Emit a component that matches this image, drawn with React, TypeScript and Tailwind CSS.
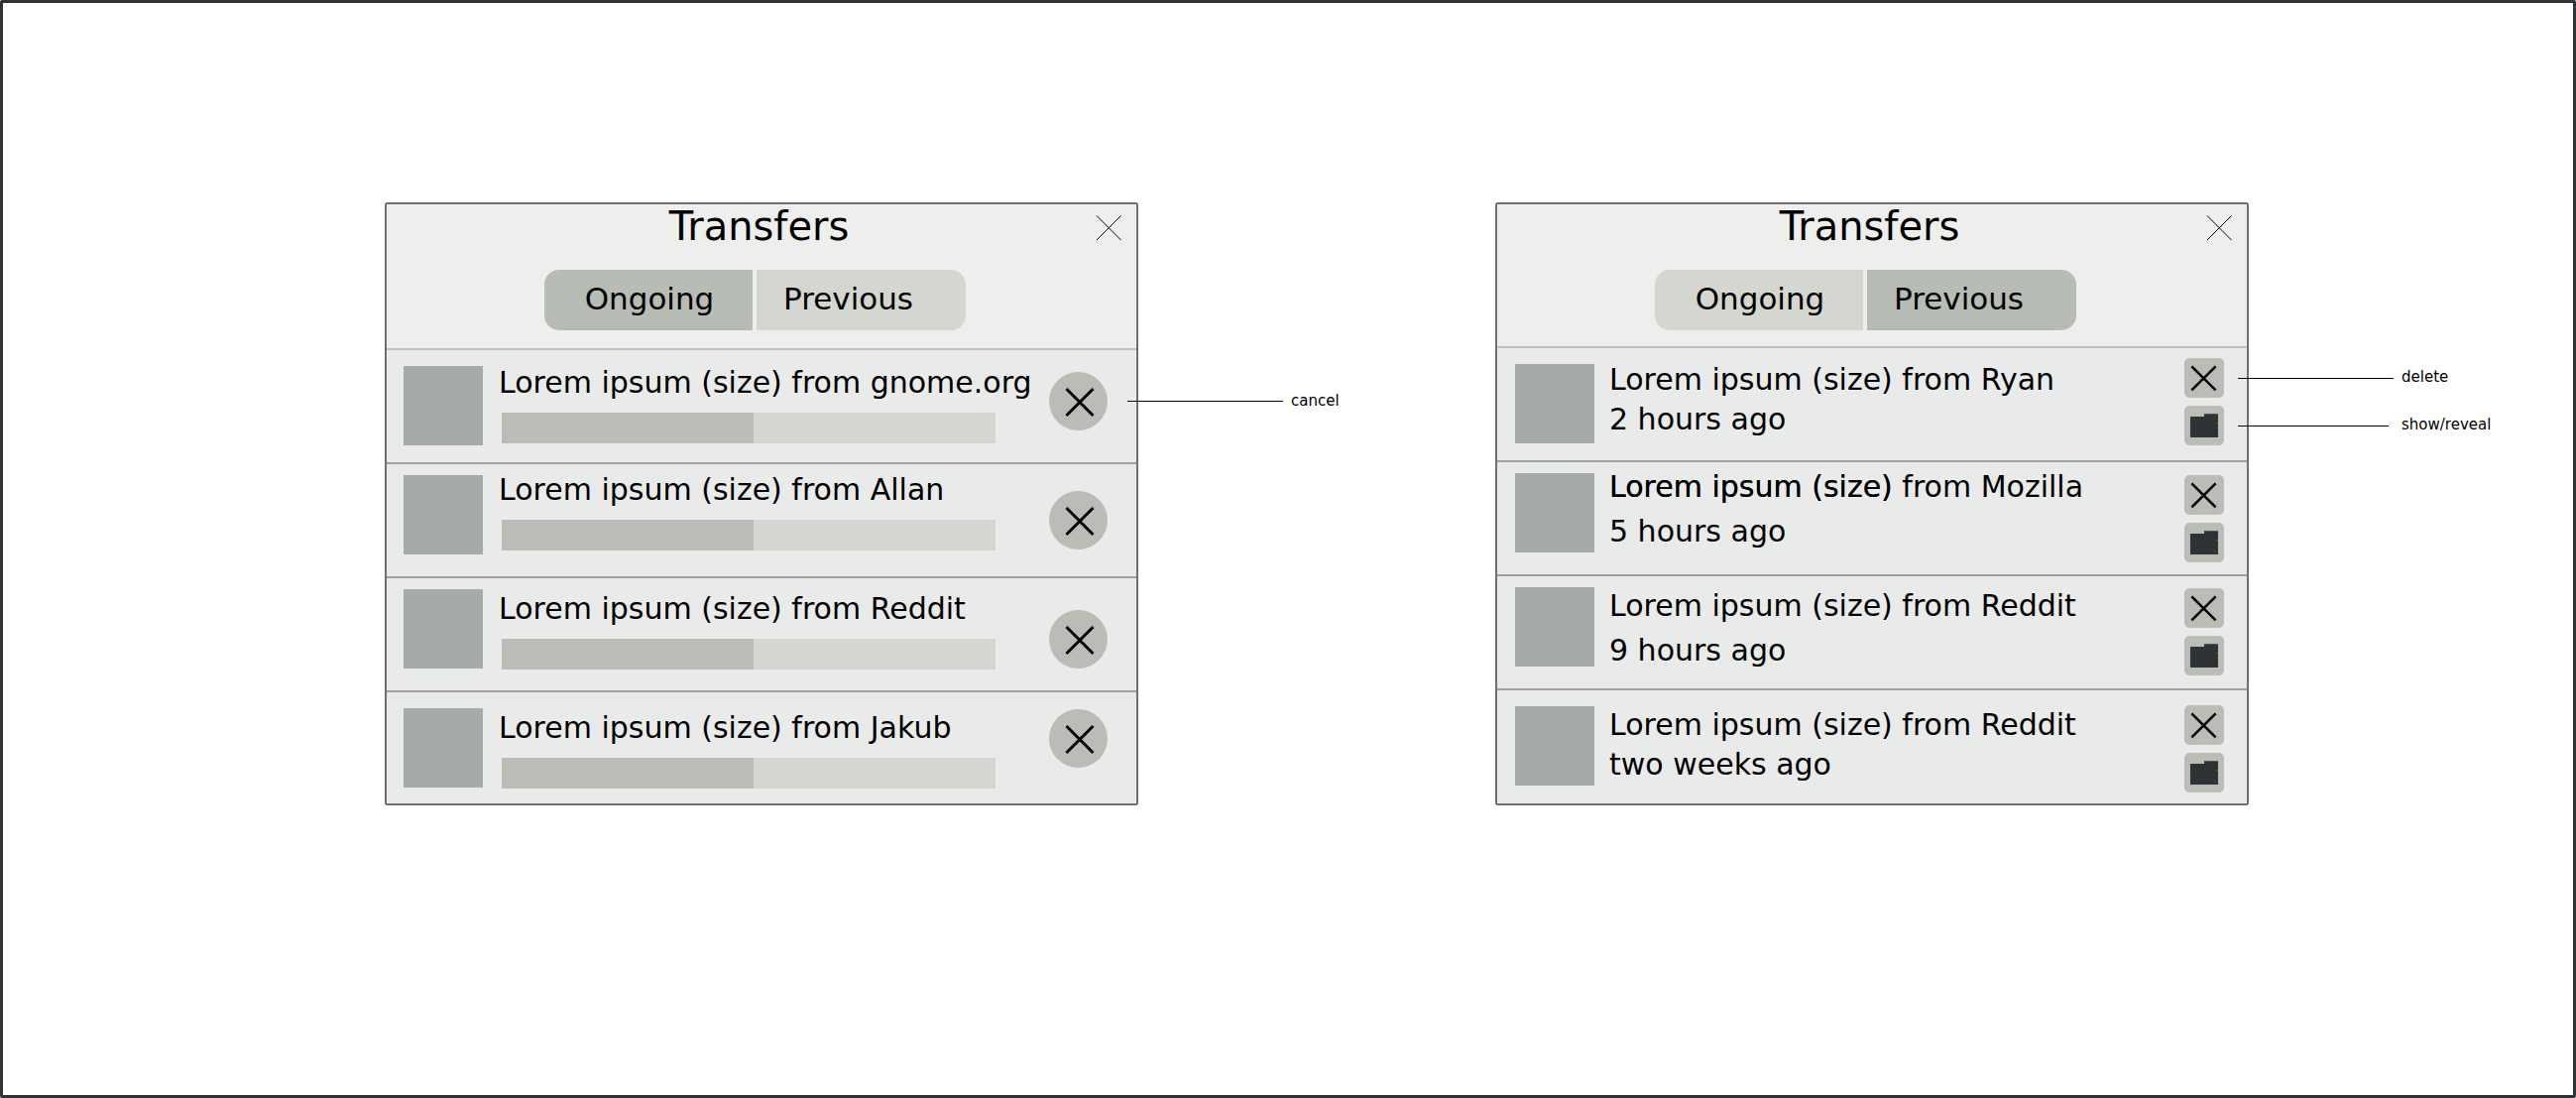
import React from "react";

type Row = {
  lead: string;
  source: string;
  when?: string;
  thumbPad: string;
  textPad: string;
  actionPad: string;
  lineGap?: string;
  emphasized?: boolean;
  notes?: string[];
};

const ongoing: Row[] = [
  { lead: "Lorem ipsum (size)", source: "from gnome.org", thumbPad: "pt-4", textPad: "pt-[15px]", actionPad: "pt-[22px]", notes: ["cancel"] },
  { lead: "Lorem ipsum (size)", source: "from Allan", thumbPad: "pt-[11px]", textPad: "pt-2", actionPad: "pt-[27px]" },
  { lead: "Lorem ipsum (size)", source: "from Reddit", thumbPad: "pt-[11px]", textPad: "pt-[13px]", actionPad: "pt-8" },
  { lead: "Lorem ipsum (size)", source: "from Jakub", thumbPad: "pt-4", textPad: "pt-[18px]", actionPad: "pt-[17px]" },
];

const previous: Row[] = [
  { lead: "Lorem ipsum (size)", source: "from Ryan", when: "2 hours ago", thumbPad: "pt-4", textPad: "pt-[14px]", lineGap: "mt-1", actionPad: "pt-[10px]", notes: ["delete", "show/reveal"] },
  { lead: "Lorem ipsum (size)", source: "from Mozilla", when: "5 hours ago", thumbPad: "pt-[11px]", textPad: "pt-[7px]", lineGap: "mt-[9px]", actionPad: "pt-[13px]", emphasized: true },
  { lead: "Lorem ipsum (size)", source: "from Reddit", when: "9 hours ago", thumbPad: "pt-[11px]", textPad: "pt-3", lineGap: "mt-[9px]", actionPad: "pt-3" },
  { lead: "Lorem ipsum (size)", source: "from Reddit", when: "two weeks ago", thumbPad: "pt-4", textPad: "pt-[17px]", lineGap: "mt-1", actionPad: "pt-[15px]" },
];

function Callout({ label, gap, line }: { label: string; gap: string; line: string }) {
  return (
    <div className={`pointer-events-none absolute inset-y-0 left-full flex items-center ${gap}`}>
      <div className="w-[165px]">
        <div className={`h-px bg-black ${line}`} />
      </div>
      <span className="pb-[2px] text-[15px] leading-5 whitespace-nowrap">{label}</span>
    </div>
  );
}

function CancelButton({ note }: { note?: string }) {
  return (
    <div className="relative">
      <button type="button" aria-label="Cancel transfer" className="block size-[59px] rounded-full bg-[#babdb6]">
        <svg viewBox="0 0 59 59" className="size-full" fill="none" stroke="#000" strokeWidth="3">
          <path d="M17.500 17L44.500 44M44.500 17L17.500 44" />
        </svg>
      </button>
      {note && <Callout label={note} gap="ml-5" line="w-[157px]" />}
    </div>
  );
}

function DeleteButton({ note }: { note?: string }) {
  return (
    <div className="relative">
      <button type="button" aria-label="Delete transfer" className="block size-10 rounded-[5px] bg-[#babdb6]">
        <svg viewBox="0 0 40 40" className="size-full" fill="none" stroke="#000" strokeWidth="2.6">
          <path d="M7.4 8.4L31.6 32.4M31.6 8.4L7.4 32.4" />
        </svg>
      </button>
      {note && <Callout label={note} gap="ml-[14px]" line="w-[157px]" />}
    </div>
  );
}

function RevealButton({ note }: { note?: string }) {
  return (
    <div className="relative">
      <button type="button" aria-label="Show in folder" className="block size-10 rounded-[5px] bg-[#babdb6]">
        <svg viewBox="0 0 40 40" className="size-full" fill="#2e3436">
          <path d="M6 11H20V8.2H34V17H33.6V18H34V32H6Z" />
        </svg>
      </button>
      {note && <Callout label={note} gap="ml-[14px]" line="w-[152px]" />}
    </div>
  );
}

function TransferRow({ row, first }: { row: Row; first: boolean }) {
  return (
    <li
      className={`flex min-h-[115px] items-start border-t-2 last:min-h-[114px] ${
        first ? "border-[#c0c2c0]" : "border-[#a1a3a2]"
      } ${row.when ? "pr-[23px] pl-[18px]" : "pr-[29px] pl-[17px]"}`}
    >
      <div className={`shrink-0 ${row.thumbPad} ${row.when ? "mr-[15px]" : "mr-4"}`}>
        <div className="size-20 bg-[#a6aaaa]" />
      </div>
      <div className={`min-w-0 flex-1 ${row.textPad}`}>
        <p className="text-[30px] leading-9 whitespace-nowrap">
          <span className={row.emphasized ? "[text-shadow:0_0_0_#000]" : ""}>{row.lead}</span> {row.source}
        </p>
        {row.when ? (
          <p className={`text-[30px] leading-9 whitespace-nowrap ${row.lineGap}`}>{row.when}</p>
        ) : (
          <div
            role="progressbar"
            aria-label={`${row.lead} ${row.source}`}
            aria-valuemin={0}
            aria-valuemax={100}
            aria-valuenow={51}
            className="mt-3 mr-[54px] ml-[3px] h-[31px] bg-[#d3d7cf]"
          >
            <div className="h-full bg-[#babdb6]" style={{ width: "51%" }} />
          </div>
        )}
      </div>
      <div className={`flex shrink-0 flex-col gap-2 ${row.actionPad}`}>
        {row.when ? (
          <>
            <DeleteButton note={row.notes?.[0]} />
            <RevealButton note={row.notes?.[1]} />
          </>
        ) : (
          <CancelButton note={row.notes?.[0]} />
        )}
      </div>
    </li>
  );
}

function TransfersDialog({ active, rows, column }: { active: "ongoing" | "previous"; rows: Row[]; column: string }) {
  const isOngoing = active === "ongoing";
  return (
    <section aria-label="Transfers" className={`flex flex-col rounded-[2px] border-2 border-[#6f7170] bg-[#eeeeec] ${column}`}>
      <header className={`relative ${isOngoing ? "pb-[17px]" : "pb-[15px]"}`}>
        <h2 className="pr-[5px] text-center text-[40px] leading-[44px]">Transfers</h2>
        <button type="button" aria-label="Close" className="absolute top-[10px] right-[14px] size-[27px]">
          <svg viewBox="0 0 27 27" className="size-full" fill="none" stroke="#000" strokeWidth="1">
            <path d="M1 1.5L25.500 26M25.500 1.500L1 26" />
          </svg>
        </button>
        <div role="tablist" className="mt-[22px] flex justify-center gap-1 pr-[13px] text-[31px] leading-9">
          <button
            type="button"
            role="tab"
            aria-selected={isOngoing}
            className={`h-[61px] w-[210px] rounded-l-[15px] pb-1 pl-[2px] text-center ${isOngoing ? "bg-[#b7bcb4]" : "bg-[#d3d7cf]"}`}
          >
            Ongoing
          </button>
          <button
            type="button"
            role="tab"
            aria-selected={!isOngoing}
            className={`h-[61px] w-[211px] rounded-r-[15px] pb-1 pl-[27px] text-left ${isOngoing ? "bg-[#d3d7cf]" : "bg-[#b7bcb4]"}`}
          >
            Previous
          </button>
        </div>
      </header>
      <ul className="mt-px flex-1 bg-[#e9ebea]">
        {rows.map((row, i) => (
          <TransferRow key={i} row={row} first={i === 0} />
        ))}
      </ul>
    </section>
  );
}

export default function App() {
  return (
    <main className="grid min-h-screen grid-cols-[385fr_760fr_360fr_760fr_327fr] content-start rounded-[2px] border-[3px] border-[#2e3436] bg-white pt-[201px] font-['DejaVu_Sans',sans-serif] text-black">
      <TransfersDialog active="ongoing" rows={ongoing} column="col-start-2" />
      <TransfersDialog active="previous" rows={previous} column="col-start-4" />
    </main>
  );
}
